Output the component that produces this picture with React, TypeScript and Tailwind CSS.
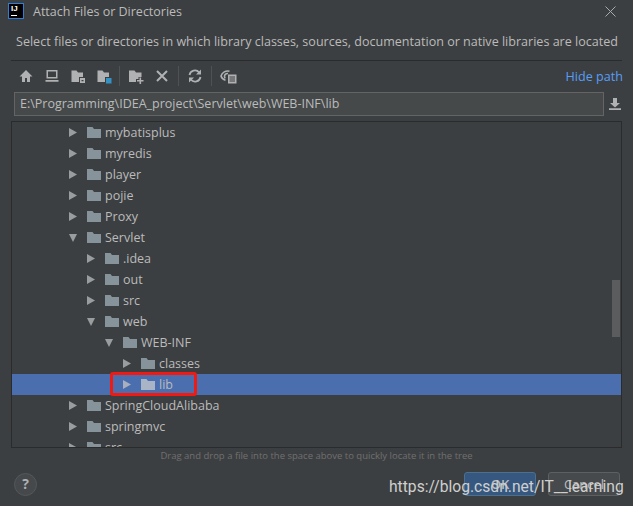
const font = { fontFamily: '"Open Sans", "Noto Sans", sans-serif' };

type Row = { name: string; depth: number; open?: boolean; selected?: boolean };
const rows: Row[] = [
  { name: "mybatisplus", depth: 0 },
  { name: "myredis", depth: 0 },
  { name: "player", depth: 0 },
  { name: "pojie", depth: 0 },
  { name: "Proxy", depth: 0 },
  { name: "Servlet", depth: 0, open: true },
  { name: ".idea", depth: 1 },
  { name: "out", depth: 1 },
  { name: "src", depth: 1 },
  { name: "web", depth: 1, open: true },
  { name: "WEB-INF", depth: 2, open: true },
  { name: "classes", depth: 3 },
  { name: "lib", depth: 3, selected: true },
  { name: "SpringCloudAlibaba", depth: 0 },
  { name: "springmvc", depth: 0 },
  { name: "src", depth: 0 },
];

function Folder({ light }: { light?: boolean }) {
  return (
    <svg width="14" height="11" viewBox="0 0 14 11" className="shrink-0">
      <path d="M0 0h5.500l1.500 2h7V11H0z" fill={light ? "#a9b4c6" : "#87939a"} />
    </svg>
  );
}

function Arrow({ open, light }: { open?: boolean; light?: boolean }) {
  return (
    <svg width="8" height="9" viewBox="0 0 8 9" className="shrink-0">
      {open ? (
        <path d="M0 1h8L4 9z" fill="#9a9d9f" />
      ) : (
        <path d="M0 0l8 4.500-8 4.500z" fill={light ? "#a9afbb" : "#9a9d9f"} />
      )}
    </svg>
  );
}

function TreeRow({ row }: { row: Row }) {
  const pad = [57, 75, 93, 111][row.depth];
  return (
    <div
      className={`relative h-[21px] flex items-center shrink-0 ${row.selected ? "bg-[#4b6eaf]" : ""}`}
      style={{ paddingLeft: pad }}
    >
      <Arrow open={row.open} light={row.selected} />
      <div className="ml-[10px] flex">
        <Folder light={row.selected} />
      </div>
      <span className="ml-[4px] mt-[2px] text-[12.5px] text-[#bbbbbb] leading-none">{row.name}</span>
      {row.selected && (
        <div className="absolute left-[98px] top-[-2px] w-[87px] h-[24px] border-[3px] border-[#f01a12] rounded-[3px]" />
      )}
    </div>
  );
}

const ic = "#afb1b3";

function Toolbar() {
  return (
    <div className="flex items-center h-[30px]">
      <div className="flex items-center pl-[18px] gap-[10px]">
        <svg width="16" height="16" viewBox="0 0 16 16"><path d="M8 2L1.500 8.500H4v5.500h3v-4h2v4h3V8.500h2.500z" fill={ic} /></svg>
        <svg width="16" height="16" viewBox="0 0 16 16"><path d="M2.500 2h11v8.500h-11zM4 3.500v5.500h8V3.500zM1.500 12h13v1.700h-13z" fill={ic} fillRule="evenodd" /></svg>
        <svg width="16" height="16" viewBox="0 0 16 16"><path d="M1.500 2.500h5l1.500 2H13V9H9v5H1.500z" fill={ic} /><path d="M10 10h5v5h-5zM11.500 12v1.200h2V12z" fill={ic} fillRule="evenodd" /></svg>
        <svg width="16" height="16" viewBox="0 0 16 16"><path d="M1.500 2.500h5l1.500 2H13V9H9v5H1.500z" fill={ic} /><rect x="10" y="10" width="5.500" height="5.500" fill="#3592c4" /></svg>
      </div>
      <div className="w-px h-[20px] bg-[#515151] ml-[7px]" />
      <div className="flex items-center pl-[8px] gap-[10px]">
        <svg width="16" height="16" viewBox="0 0 16 16"><path d="M1 2.500h5.500l1.500 2h5.500V9h-3v2H8v3H1z" fill={ic} /><path d="M11.500 9.500h1.600V12H15.500v1.600H13.100V16H11.500V13.600H9V12H11.500z" fill={ic} /></svg>
        <svg width="16" height="16" viewBox="0 0 16 16"><path d="M3 3l10 10M13 3L3 13" stroke={ic} strokeWidth="2" fill="none" /></svg>
      </div>
      <div className="w-px h-[20px] bg-[#515151] ml-[8px]" />
      <div className="pl-[8px]">
        <svg width="16" height="16" viewBox="0 0 16 16" className="block"><path d="M2.500 7a5.500 5.500 0 0 1 9.700-2.500M13.500 9a5.500 5.500 0 0 1-9.700 2.500" stroke={ic} strokeWidth="1.800" fill="none" /><path d="M14 1.500V6.500H9zM2 14.500V9.500H7z" fill={ic} /></svg>
      </div>
      <div className="w-px h-[20px] bg-[#515151] ml-[8px]" />
      <div className="pl-[8px]">
        <svg width="18" height="16" viewBox="0 0 18 16" className="block"><path d="M9.500 3.200A7 7 0 0 0 1 8c.6 2 2.400 3.600 4.500 4.200" stroke={ic} strokeWidth="1.600" fill="none" /><path d="M8 5.500a3 3 0 0 0-3.500 3c0 .8.300 1.400.800 1.800" stroke={ic} strokeWidth="1.600" fill="none" /><path d="M8 6.500H16.500V15.500H8z" fill={ic} /><path d="M9.500 9h5.500M9.500 11h5.500M9.500 13h5.500" stroke="#3c3f41" strokeWidth="1" /></svg>
      </div>
      <span className="ml-auto mr-[10px] mt-[2px] text-[12.6px] text-[#589df6] leading-none">Hide path</span>
    </div>
  );
}

export default function App() {
  return (
    <div className="relative w-[633px] h-[506px] bg-[#3c3f41] overflow-hidden flex flex-col" style={font}>
      <div className="h-[24px] flex items-center pl-[8px] pr-[17px] shrink-0">
        <div className="w-[16px] h-[16px] mb-[2px] bg-black border border-[#2f7fd6] relative shrink-0">
          <span className="absolute left-[2px] top-[-1px] text-[8px] font-bold text-white leading-[11px]" style={{ fontFamily: '"Liberation Sans", sans-serif' }}>IJ</span>
          <div className="absolute left-[2px] bottom-[2px] w-[6px] h-[1px] bg-white" />
        </div>
        <span className="ml-[9px] mt-[1px] text-[12.5px] text-[#bbbbbb] leading-none">Attach Files or Directories</span>
        <svg width="11" height="11" viewBox="0 0 11 11" className="ml-auto mb-[2px]"><path d="M.5.500l10 10M10.500.500l-10 10" stroke="#a8aaac" strokeWidth="1" fill="none" /></svg>
      </div>
      <div className="h-[36px] shrink-0 pl-[16px] flex items-center text-[12.55px] text-[#bbbbbb] leading-none whitespace-nowrap">
        Select files or directories in which library classes, sources, documentation or native libraries are located
      </div>
      <div className="mx-[11px] h-px bg-[#2b2b2b] shrink-0" />
      <Toolbar />
      <div className="flex items-center shrink-0 h-[26px] pl-[14px] pr-[12px]">
        <div className="w-[590px] h-[24px] bg-[#45494a] border border-[#646464] flex items-center pl-[5px] pt-[1px] text-[12.5px] text-[#bbbbbb] leading-none">
          E:\Programming\IDEA_project\Servlet\web\WEB-INF\lib
        </div>
        <svg width="12" height="12" viewBox="0 0 12 12" className="ml-auto"><path d="M4 0h4v5h3L6 9.500 1 5h3zM0 10.300h12V12H0z" fill={ic} /></svg>
      </div>
      <div className="relative mt-[4px] mx-[11px] h-[327px] border border-[#2b2b2b] overflow-hidden flex flex-col shrink-0">
        {rows.map((r, i) => <TreeRow key={i} row={r} />)}
        <div className="absolute right-[1px] top-[158px] w-[8px] h-[57px] bg-[#5a5c5e]" />
      </div>
      <div className="text-center text-[9.5px] text-[#707070] leading-none mt-[1px] h-[14px] flex items-center justify-center shrink-0">
        Drag and drop a file into the space above to quickly locate it in the tree
      </div>
      <div className="flex items-center pl-[14px] pr-[13px] mt-[9px]">
        <div className="w-[23px] h-[23px] rounded-full bg-[#46494b] border border-[#555759] flex items-center justify-center text-[14px] font-bold text-[#afb1b3] leading-none">?</div>
        <div className="ml-auto w-[72px] h-[24px] rounded-[3px] bg-[#365880] border border-[#4c708c] flex items-center justify-center text-[13px] font-semibold text-[#bbbbbb] leading-none">OK</div>
        <div className="ml-[12px] w-[72px] h-[24px] rounded-[3px] bg-[#474a4c] border border-[#5e6060] flex items-center justify-center text-[13px] text-[#bbbbbb] leading-none">Cancel</div>
      </div>
      <div className="absolute left-[389px] top-[476px] text-[15.65px] leading-[22px] text-[#cfcfcf] whitespace-nowrap" style={{ fontFamily: 'Roboto, sans-serif' }}>
        https://blog.csdn.net/IT__learning
      </div>
    </div>
  );
}
